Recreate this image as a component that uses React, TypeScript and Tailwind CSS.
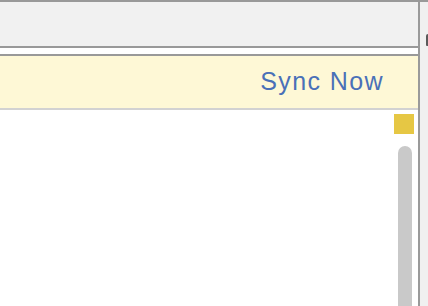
import React from 'react';

const App = () => {
  return (
    <div
      className="h-[306px] w-[428px] overflow-hidden bg-white border-t-2 border-[#999999] flex"
      style={{ fontFamily: '"Liberation Sans", Arial, sans-serif' }}
    >
      {/* Main pane */}
      <div className="w-[418px] flex flex-col">
        {/* Toolbar */}
        <div className="h-[46px] bg-[#f1f1f1] border-b-2 border-[#999999]"></div>
        <div className="h-[8px] bg-white border-b-2 border-[#999999]"></div>

        {/* Sync banner */}
        <div className="h-[54px] bg-[#fef8d6] border-b-2 border-[#d2d2d2] flex items-center justify-end pr-[34px]">
          <button className="text-[25px] leading-none text-[#4a70b8] tracking-[1.4px] pb-[2px]">Sync Now</button>
        </div>

        {/* Content */}
        <div className="flex-1 flex flex-col items-end pt-[4px] pr-[4px]">
          <div className="w-[20px] h-[20px] bg-[#e6c744]"></div>
          <div className="mt-[12px] mr-[2px] w-[14px] flex-1 bg-[#c9c9c9] rounded-t-full"></div>
        </div>
      </div>

      {/* Divider */}
      <div className="w-[2px] bg-[#9a9a9a]"></div>

      {/* Side panel */}
      <div className="flex-1 bg-[#f0f0f0] pt-[32px] flex justify-end">
        <div className="w-[2px] h-[12px] bg-[#5a5a5a] rounded-tl-[2px] rounded-bl-[1px]"></div>
      </div>
    </div>
  );
};

export default App;
